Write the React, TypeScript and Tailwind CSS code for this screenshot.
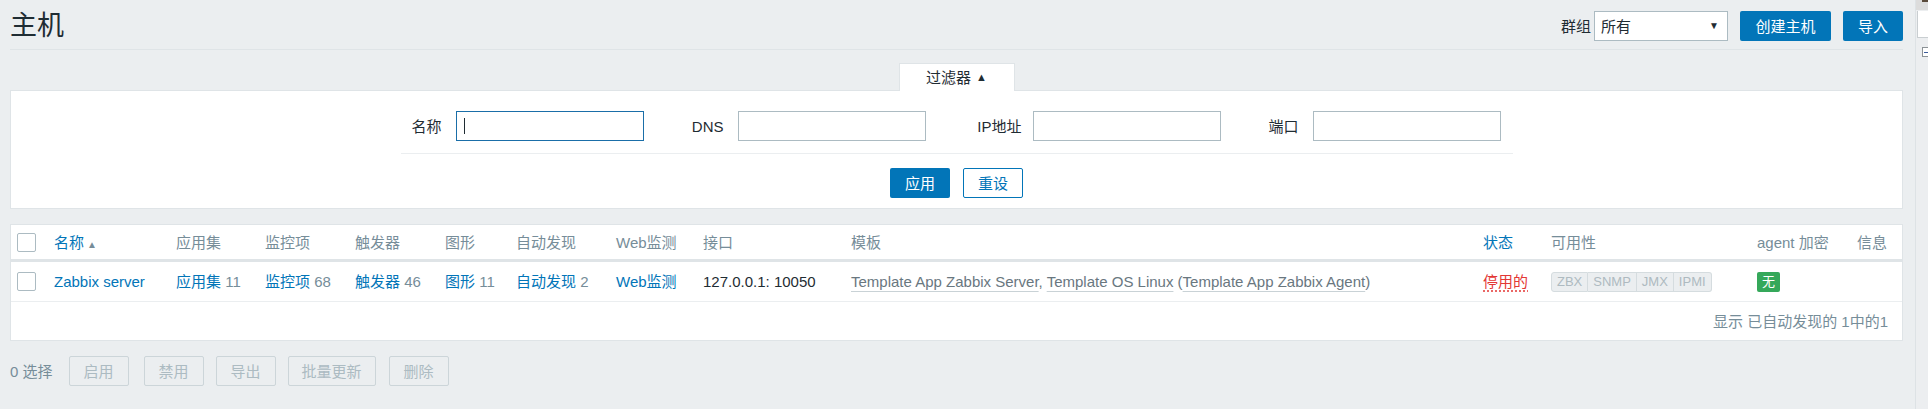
import React from "react";

const cols =
  "grid grid-cols-[43px_122px_89px_90px_90px_71px_100px_87px_148px_632px_68px_206px_100px_1fr]";

const Checkbox = () => (
  <span className="block w-[19px] h-[19px] ml-[6px] rounded-[2px] border border-[#acbbc2] bg-white" />
);

const Count = ({ label, count }: { label: string; count?: string }) => (
  <span>
    <span className="text-[#0275b8]">{label}</span>
    {count && <span className="text-[#768d99]"> {count}</span>}
  </span>
);

const FilterField = ({
  label,
  labelWidth,
  gap,
  focused,
}: {
  label: string;
  labelWidth: string;
  gap: string;
  focused?: boolean;
}) => (
  <>
    <span className={`${labelWidth} text-right`}>{label}</span>
    <span
      className={`${gap} flex items-center w-[188px] h-[30px] bg-white border ${
        focused ? "border-[#1a6ea8]" : "border-[#acbbc2]"
      }`}
    >
      {focused && <span className="ml-[7px] w-px h-[16px] bg-[#1f2c33]" />}
    </span>
  </>
);

const DisabledButton = ({ label, width, ml }: { label: string; width: string; ml: string }) => (
  <button
    className={`${width} ${ml} h-[30px] rounded-[2px] border border-[#ccd5d9] bg-[#ebeef0] text-[#acbbc2]`}
  >
    {label}
  </button>
);

const App = () => {
  return (
    <div className="flex w-[1928px] min-h-[409px] bg-[#ebeef0] text-[15px] leading-none text-[#1f2c33] font-['Liberation_Sans','Noto_Sans_CJK_SC',sans-serif]">
      <main className="w-[1915px] shrink-0 pl-[10px] pr-[12px]">
        {/* header */}
        <div className="flex items-center justify-between pt-[11px] pb-[8px] border-b border-[#dfe4e7]">
          <h1 className="text-[27px] leading-[30px]">主机</h1>
          <div className="flex items-center">
            <span className="text-[#1f2c33]">群组</span>
            <span className="ml-[3px] flex items-center justify-between w-[134px] h-[30px] bg-white border border-[#acbbc2] pl-[6px] pr-[8px]">
              <span>所有</span>
              <span className="text-[10px]">▼</span>
            </span>
            <button className="ml-[12px] w-[91px] h-[30px] rounded-[2px] bg-[#0275b8] text-white">
              创建主机
            </button>
            <button className="ml-[12px] w-[60px] h-[30px] rounded-[2px] bg-[#0275b8] text-white">
              导入
            </button>
          </div>
        </div>

        {/* filter */}
        <div className="mt-[13px]">
          <div className="flex justify-center">
            <div className="relative z-10 -mb-px flex items-center justify-center w-[116px] h-[28px] bg-white border-x border-t border-[#dfe4e7]">
              过滤器 <span className="ml-[5px] text-[11px]">▲</span>
            </div>
          </div>
          <div className="bg-white border border-[#dfe4e7] pt-[20px] pb-[10px]">
            <div className="w-[1112px] mx-auto">
              <div className="flex items-center h-[30px]">
                <FilterField label="名称" labelWidth="w-[41px]" gap="ml-[14px]" focused />
                <FilterField label="DNS" labelWidth="w-[80px]" gap="ml-[14px]" />
                <FilterField label="IP地址" labelWidth="w-[96px]" gap="ml-[11px]" />
                <FilterField label="端口" labelWidth="w-[78px]" gap="ml-[14px]" />
              </div>
              <div className="mt-[12px] border-t border-[#ebeef0]" />
              <div className="mt-[14px] flex justify-center gap-[13px]">
                <button className="w-[60px] h-[30px] rounded-[2px] bg-[#0275b8] text-white">应用</button>
                <button className="w-[60px] h-[30px] rounded-[2px] bg-white border border-[#0275b8] text-[#0275b8]">
                  重设
                </button>
              </div>
            </div>
          </div>
        </div>

        {/* hosts table */}
        <div className="mt-[15px] bg-white border border-[#dfe4e7]">
          <div className={`${cols} items-center h-[37px] border-b-[3px] border-[#dfe4e7] text-[#768d99]`}>
            <Checkbox />
            <span className="text-[#0275b8]">
              名称<span className="ml-[3px] text-[10px] text-[#768d99]">▲</span>
            </span>
            <span>应用集</span>
            <span>监控项</span>
            <span>触发器</span>
            <span>图形</span>
            <span>自动发现</span>
            <span>Web监测</span>
            <span>接口</span>
            <span>模板</span>
            <span className="text-[#0275b8]">状态</span>
            <span>可用性</span>
            <span>agent 加密</span>
            <span>信息</span>
          </div>
          <div className={`${cols} items-center h-[40px] border-b border-[#ebeef0]`}>
            <Checkbox />
            <span className="text-[#0275b8]">Zabbix server</span>
            <Count label="应用集" count="11" />
            <Count label="监控项" count="68" />
            <Count label="触发器" count="46" />
            <Count label="图形" count="11" />
            <Count label="自动发现" count="2" />
            <Count label="Web监测" />
            <span>127.0.0.1: 10050</span>
            <span className="text-[#69777f]">
              <span className="underline decoration-[#c9d2d6] underline-offset-[4px]">Template App Zabbix Server</span>
              ,{" "}
              <span className="underline decoration-[#c9d2d6] underline-offset-[4px]">Template OS Linux</span> (
              <span className="underline decoration-[#c9d2d6] underline-offset-[4px]">Template App Zabbix Agent</span>)
            </span>
            <span className="text-[#e33734] underline decoration-dotted decoration-[#e33734] underline-offset-[4px]">
              停用的
            </span>
            <span className="flex w-fit text-[13px] text-[#aebac0]">
              <span className="h-[20px] flex items-center px-[5px] bg-[#ebeef0] border border-[#d5dcdf] rounded-l-[3px]">ZBX</span>
              <span className="h-[20px] flex items-center px-[5px] bg-[#ebeef0] border-y border-r border-[#d5dcdf]">SNMP</span>
              <span className="h-[20px] flex items-center px-[5px] bg-[#ebeef0] border-y border-r border-[#d5dcdf]">JMX</span>
              <span className="h-[20px] flex items-center px-[5px] bg-[#ebeef0] border-y border-r border-[#d5dcdf] rounded-r-[3px]">IPMI</span>
            </span>
            <span className="flex w-[23px] h-[20px] items-center justify-center rounded-[2px] bg-[#35a85a] text-[13px] text-white">
              无
            </span>
            <span />
          </div>
          <div className="flex items-center justify-end h-[38px] pr-[14px] text-[#768d99]">
            显示 已自动发现的 1中的1
          </div>
        </div>

        {/* actions */}
        <div className="mt-[15px] flex items-center">
          <span className="text-[#768d99]">0 选择</span>
          <DisabledButton label="启用" width="w-[60px]" ml="ml-[16px]" />
          <DisabledButton label="禁用" width="w-[60px]" ml="ml-[15px]" />
          <DisabledButton label="导出" width="w-[60px]" ml="ml-[12px]" />
          <DisabledButton label="批量更新" width="w-[88px]" ml="ml-[12px]" />
          <DisabledButton label="删除" width="w-[60px]" ml="ml-[13px]" />
        </div>
      </main>

      {/* side strip */}
      <aside className="w-[13px] shrink-0 border-l border-[#dde2e5] bg-[#eceef0] flex flex-col">
        <div className="relative h-[10px] bg-[#dcdcdc]">
          <span className="absolute left-[6px] top-0 w-[6px] h-[2px] bg-[#5a4a3a]" />
        </div>
        <div className="mt-px ml-[1px] h-[27px] bg-white border-l border-b border-[#c9ced1]" />
        <div className="mt-[9px] ml-[6px] flex items-center w-[10px] h-[10px] border border-[#8c9296] bg-white">
          <span className="mx-[1px] w-full h-px bg-[#3b5b9a]" />
        </div>
      </aside>
    </div>
  );
};

export default App;
